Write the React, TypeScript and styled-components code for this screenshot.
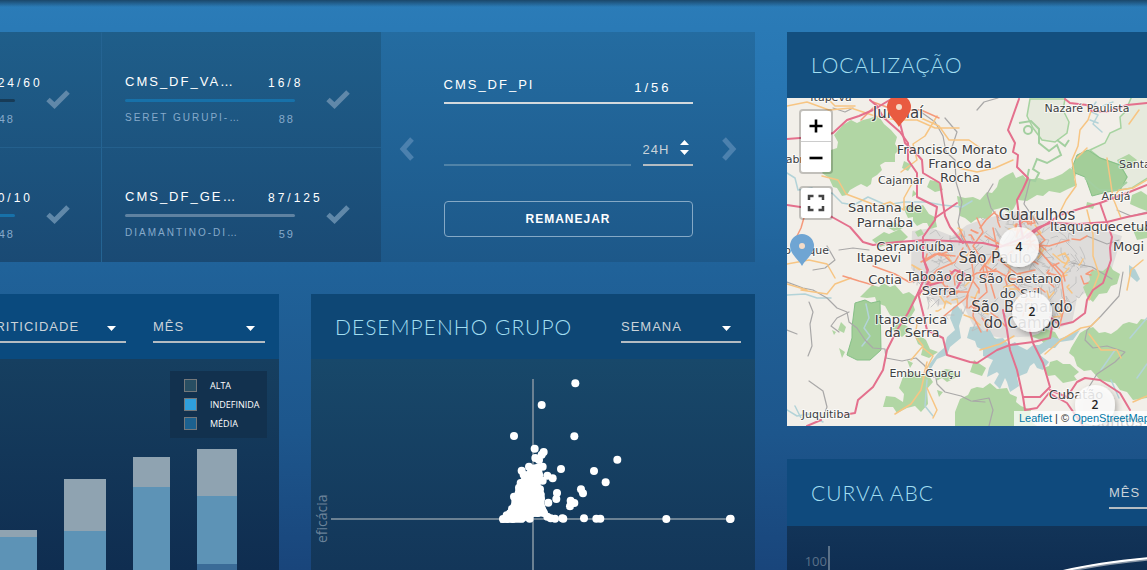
import React from 'react';
import styled, { createGlobalStyle } from 'styled-components';

const GlobalStyle = createGlobalStyle`
  *, *::before { box-sizing: border-box; }
  body {
    margin: 0;
    font-family: 'Liberation Sans', Arial, sans-serif;
    background: #19467c;
  }
  button, input, select { font: inherit; color: inherit; border-radius: 0; }
`;

/* ---------- page ---------- */

const Page = styled.main`
  min-height: 100vh;
  display: grid;
  grid-template-columns: minmax(0, 755fr) minmax(0, 360fr);
  column-gap: 32px;
  padding-top: 32px;
  overflow: hidden;
  background:
    linear-gradient(rgba(16, 36, 54, 0.6), rgba(16, 36, 54, 0) 7px),
    linear-gradient(#2b7cb8 0%, #2774b0 20%, #206299 47%, #1d568c 76%, #19457b 100%);
`;

const Column = styled.div<{ $gap: number }>`
  display: flex;
  flex-direction: column;
  gap: ${(p) => p.$gap}px;
  min-width: 0;
`;

const Row = styled.div`
  flex: 1;
  display: grid;
  grid-template-columns: minmax(0, 279fr) minmax(0, 444fr);
  gap: 32px;
`;

/* ---------- stock transfer ---------- */

const Transfer = styled.section`
  display: grid;
  grid-template-columns: minmax(0, 381fr) minmax(0, 374fr);
`;

const ItemGrid = styled.div`
  display: grid;
  grid-template-columns: 280px 280px;
  grid-template-rows: 115px 115px;
  justify-content: end;
  overflow: hidden;
  background: linear-gradient(#1f5e8a, #1a4a74);
`;

const Item = styled.article<{ $divided: boolean }>`
  display: flex;
  align-items: center;
  gap: 31px;
  padding: 20px 0 0 23px;
  border-left: 1px solid #256493;
  border-top: ${(p) => (p.$divided ? '1px solid #24608d' : '1px solid transparent')};
  background-clip: padding-box;
`;

const ItemBody = styled.div`
  width: 170px;
`;

const ItemLine = styled.div`
  display: flex;
  align-items: flex-end;
  height: 17px;
  line-height: 16px;
  font-size: 12px;
  white-space: nowrap;
  color: #fff;
`;

const ItemName = styled.span`
  flex: 0 0 143px;
  align-self: flex-start;
  font-size: 13px;
  letter-spacing: 2px;
`;

const ItemCount = styled.span`
  flex: 0 0 27px;
  letter-spacing: 3px;
`;

const ItemFootLine = styled(ItemLine)`
  justify-content: space-between;
  letter-spacing: 2px;
  font-size: 11px;
  color: #86aacb;
`;

const ItemPlace = styled.span`
  align-self: flex-start;
  font-size: 10px;
`;

const Meter = styled.div<{ $tone: string }>`
  height: 3px;
  margin: 8px 0;
  border-radius: 2px;
  background: ${(p) => p.$tone};
`;

const Form = styled.form`
  display: flex;
  align-items: center;
  justify-content: space-between;
  padding: 4px 18px 0;
  background: linear-gradient(#246ca1, #1d5889);
`;

const ArrowButton = styled.button`
  padding: 0;
  border: 0;
  background: none;
  color: #4c81ae;
  line-height: 0;
`;

const Fields = styled.div`
  flex: 0 1 249px;
  min-width: 0;
  padding-top: 14px;
  color: #fff;
  font-size: 13px;
  line-height: 16px;
  letter-spacing: 2px;
`;

const Product = styled.div`
  display: flex;
  justify-content: space-between;
  padding-bottom: 6px;
  margin-top: 2px;
  border-bottom: 2px solid #d3d9dd;
`;

const ProductName = styled.span`
  padding-bottom: 3px;
`;

const ProductCount = styled.span`
  padding: 3px 21px 0 0;
  letter-spacing: 3px;
`;

const FieldRow = styled.div`
  display: flex;
  gap: 12px;
  margin: 36px 0 35px;
`;

const TextBox = styled.input`
  flex: 1;
  min-width: 0;
  height: 26px;
  padding: 0;
  border: 0;
  border-bottom: 2px solid #5083a8;
  background: none;
  outline: none;
`;

const SubmitButton = styled.button`
  display: block;
  width: 100%;
  height: 36px;
  padding: 0;
  border: 1px solid #85a9c6;
  border-radius: 4px;
  background: none;
  font-size: 12px;
  font-weight: 700;
  letter-spacing: 1px;
`;

/* ---------- drop-downs ---------- */

const SelectBox = styled.label<{ $width: number }>`
  position: relative;
  display: block;
  flex: 0 0 ${(p) => p.$width}px;
`;

const Select = styled.select`
  appearance: none;
  display: block;
  width: 100%;
  height: 26px;
  padding: 0 0 4px;
  border: 0;
  border-bottom: 2px solid #b4bcc2;
  outline: none;
  background: none;
  color: #cad3d9;
  font-size: 13px;
  letter-spacing: 1px;
`;

const SelectIcon = styled.svg<{ $spinner?: boolean }>`
  position: absolute;
  right: ${(p) => (p.$spinner ? 4 : 10)}px;
  top: ${(p) => (p.$spinner ? 0 : 9)}px;
  pointer-events: none;
  fill: #fff;
`;

function Dropdown({ name, value, width, spinner }: { name: string; value: string; width: number; spinner?: boolean }) {
  return (
    <SelectBox $width={width}>
      <Select aria-label={name} defaultValue={value}>
        <option>{value}</option>
      </Select>
      {spinner ? (
        <SelectIcon $spinner width="9" height="15" viewBox="0 0 9 15">
          <path d="M0 5 4.500 0 9 5zM0 10h9L4.500 15z" />
        </SelectIcon>
      ) : (
        <SelectIcon width="9" height="5" viewBox="0 0 9 5">
          <path d="M0 0h9L4.500 5z" />
        </SelectIcon>
      )}
    </SelectBox>
  );
}

/* ---------- cards ---------- */

const Card = styled.section<{ $fill?: boolean }>`
  display: flex;
  flex-direction: column;
  min-width: 0;
  overflow: hidden;
  flex: ${(p) => (p.$fill ? '1 0 auto' : '0 0 auto')};
`;

const CardHeader = styled.header<{ $tone: string; $height: number; $end?: boolean }>`
  display: flex;
  align-items: center;
  justify-content: ${(p) => (p.$end ? 'flex-end' : 'space-between')};
  gap: 27px;
  height: ${(p) => p.$height}px;
  padding: 6px 14px 0 24px;
  overflow: hidden;
  background: ${(p) => p.$tone};
`;

const Title = styled.h2`
  margin: 0;
  padding-bottom: 6px;
  flex-shrink: 0;
  font-family: Lato, sans-serif;
  font-size: 21px;
  font-weight: 300;
  line-height: 24px;
  letter-spacing: 1px;
  color: #a2dff2;
`;

const CardBody = styled.div<{ $from: string; $to: string }>`
  position: relative;
  flex: 1;
  min-height: 44px;
  background: linear-gradient(${(p) => p.$from}, ${(p) => p.$to});
`;

const Chart = styled.svg`
  display: block;
  width: 100%;
  font-family: 'Open Sans', sans-serif;
`;

const Legend = styled.ul`
  position: absolute;
  top: 12px;
  right: 12px;
  width: 97px;
  margin: 0;
  padding: 5px 0 5px 14px;
  list-style: none;
  background: #12314e;
  color: #fff;
  font: 9px/19px 'Open Sans', sans-serif;
`;

const LegendItem = styled.li<{ $tone: string }>`
  display: flex;
  align-items: center;
  gap: 13px;
  height: 19px;
  &::before {
    content: '';
    width: 13px;
    height: 13px;
    border: 1px solid #74787b;
    background: ${(p) => p.$tone};
  }
`;

/* ---------- map ---------- */

const MapArea = styled.div`
  position: relative;
  height: 328px;
  overflow: hidden;
  background: #f2efe9;
`;

const MapDrawing = styled.svg`
  display: block;
  width: 100%;
  height: 100%;
  font-family: 'DejaVu Sans', sans-serif;
`;

const Controls = styled.div`
  position: absolute;
  top: 11px;
  left: 12px;
  display: flex;
  flex-direction: column;
  gap: 12px;
`;

const ControlGroup = styled.div`
  border: 2px solid rgba(0, 0, 0, 0.2);
  border-radius: 4px;
  background-clip: padding-box;
  background-color: #fff;
`;

const ControlButton = styled.button`
  display: flex;
  align-items: center;
  justify-content: center;
  width: 30px;
  height: 30px;
  padding: 0;
  border: 0;
  background: none;
  color: #000;
  & + & {
    height: 31px;
    border-top: 1px solid #ccc;
  }
`;

const Attribution = styled.div`
  position: absolute;
  left: 227px;
  bottom: 0;
  height: 15px;
  padding: 0 5px;
  white-space: nowrap;
  background: rgba(255, 255, 255, 0.75);
  color: #333;
  font-size: 11px;
  line-height: 14px;
`;

const MapLink = styled.a`
  color: #0078a8;
  text-decoration: none;
`;

const greens = [
  'M56 27 64 22 70 25 76 22 84 20 88 18 93 20 97 26 104 32 110 39 108 46 112 52 108 56 108 64 98 64 93 67 95 72 90 77 85 80 84 86 80 89 74 86 70 88 63 92 60 97 55 98 50 90 46 89 42 80 35 75 39 70 43 66 40 58 44 52 50 50 51 44 47 37z',
  'M116 109 124 106 130 109 136 107 142 116 148 119 150 129 143 131 140 125 136 125 130 128 126 123 126 119 121 120z',
  'M170 98 178 100 186 99 193 102 200 94 205 95 210 89 212 82 218 78 226 74 229 80 236 77 240 82 252 80 258 82 266 80 275 76 283 70 290 75 287 81 290 87 281 91 273 95 262 93 256 98 250 97 240 103 231 102 227 110 223 115 214 110 206 112 204 118 200 121 193 120 188 122 184 125 178 120 173 118z',
  'M143 82l10 2 3 8-8 2-8-5zM117 63l8 4-4 6-6-3zM126 92l4 4-5 3z',
  'M85 142l12-8 5 2 11-5 8 8-10 8-6-2-12 4zM98 128l10-4 8 6-9 3zM128 134l6-3 3 5-6 3z',
  'M80 192 85 187 92 189 96 185 103 189 108 187 116 196 122 194 130 200 126 206 128 212 120 225 114 218 109 220 103 217 98 208 90 205 88 199 80 200 73 199z',
  'M116 279 126 273 131 277 140 275 146 284 140 291 141 306 134 314 128 308 120 310 110 315 106 309 96 309 99 298 108 299 116 304 117 296 112 290z',
  'M127 236l8 3 4 3 4 9 8 3-9 6-8-3 2-8-5-3zM152 274l7-3 6 1 7 6-12 6-5-4-6 3zM104 231l8-6 6 2 6 4-9 8zM120 262l6 3-3 5zM150 292l6 2-4 5z',
  'M293 235 298 232 306 229 312 235 318 234 324 236 330 232 336 226 342 224 350 226 354 221 360 222 360 300 346 302 340 294 333 292 328 285 322 284 313 282 304 272 297 273 290 268 287 259 282 255 284 250z',
  'M168 314 173 301 181 297 184 291 190 289 196 290 203 285 210 291 220 290 223 296 230 299 229 304 234 308 244 312 242 322 250 328 168 328z',
  'M296 189 303 182 302 177 306 172 316 173 323 167 326 172 333 176 330 186 324 188 320 195 312 196 306 204 300 199z',
  'M256 270 262 268 263 264 270 262 276 266 283 266 292 274 287 278 290 282 276 285 268 277 261 278z',
  'M243 238l8-2 7-5 10 3 4 7-14 6-4-5zM203 238l9 4-2 9-10-4zM187 262l12 8-4 8-12-4z',
  'M345 97l9-4 6 4v16l-8-3-9-4zM346 132l14-4v12l-10 2zM300 104l8 2-2 5-7-2z',
  'M54 224l5 5-2 6-6-3zM52 250l6 4-3 6zM45 232l4 2-2 3zM330 62l12-6 8 6-6 8-10 2z',
];

const waters = [
  'M183 229 192 228 196 233 203 232 208 241 216 240 222 247 228 244 232 248 240 252 246 247 252 247 266 239 272 241 280 238 293 232 286 242 273 244 268 250 262 250 253 257 262 264 256 272 250 270 247 265 243 268 240 275 230 279 232 288 223 294 220 284 218 280 213 291 207 285 212 276 210 274 200 279 202 270 206 262 196 258 196 252 190 249 188 243 180 240z',
  'M166 209 170 207 176 215 172 228 174 240 163 249 160 257 150 261 143 272 141 268 151 255 157 250 160 239 168 232 163 220z',
  'M342 167l6 4 5 10-3 3-8-7z',
];

const waterLines = [
  'M0 75l8 5 3 12 14-2 12 8 8-3 10 10 12 2 14-8 18 8 18-3 22 0 16 3 20 2 10-6',
  'M0 197l18-1 12 4 14 0M79 206l3 14-5 10 6 8-8 10M309 4l-6 9 8 4-5 9 9 8M316 8l10-4M303 22l8 3',
  'M328 252l-14 20M343 240l17-20M350 280l10-14M332 300l-8-18M0 312l10 6 12-2 14 8M8 308l6 12M140 282l-2 26 8 10',
];

const minorRoads = [
  'M190 12l7-8 14-4M46 10l12 4 8-4M134 14l14 10 8 14 3 16 9 8 1 22 6 20-4 20 4 16 5 8',
  'M0 184l16 6 10 2 14 8 10 10 10 4 2 10 8 6 8 12 8 8 12 1 1 9 16 3 14-3 8 7 10 12M148 274l2 12 8 8 16 4 10 5 14 1',
  'M52 152l14-2 16 2M40 148l8 14-10 8-12 2M22 204l4 10-3 12 2 22-4 10M0 232l10 4M62 214l-12 6-6 8 8 6M22 283l14 10 4 16-3 8',
  'M336 174l-4 24-18 20-14 14-2 10 8 8 14-2 18 6-10 10-18 12-10 16M186 303l16-3 4 12-4 16',
  'M243 82l-6 24 14 20M206 86l-6 10 4 14 8 10M158 20l12 14-6 18M26 52l10 10M330 112l14 6 16-4M300 138l20 8 12-4M285 165l20 4 20 12',
];

const secondaryRoads = [
  'M0 8l20-4 22 8 22-2 24 8 22 4 20 0 18 8 24 0M40 0l8 8 20 0M150 18l-12 20-12 8 4 16-16 12M134 20l18 8 10 14 20 0 14 10',
  'M35 78l16 4 8 14 16 6 16 6 12-4 14 8 0-12 10-18M14 192l26 4 8-10 16-6M0 186l20 6M48 180l-8-14-18-4-22 4',
  'M305 10l-4 12-8 10-2 16-6 14 2 12 2 14-10 14-6 12M290 60l10-10',
  'M172 70l18 4 18-4 18-8M124 262l12-14-8-10 2-12M136 280l4-16M136 250l10 8-8 16-4 18-10 14-16 10M340 192l4-20 12-10M193 252l20-6 14-8M258 256l16-14 20-12 10-2 8-8M302 236l12 16 16 0 4 8',
  'M320 60l6 40 8 20M300 112l6 24 0 22 6 18-10 26M352 12l-10 14M360 82l-14 8-14 2-6 8M346 304l14-6M140 290l10 22-4 8',
];

const primaryRoads = [
  'M56 178l16 5 14 4M86 168l22 8 14 8 12-2M86 10l-12 12M18 116l-4 14-8 16M86 4l22 8 26 0 18 8',
  'M168 158l-20-2-14 8M176 150l-8 14-18 8-10 12M173 132l10 20 4 28-8 20-22 18M190 120l6 14-10 14 12 18 10 34',
  'M198 138l18 10 22-2 24 2 20-6M246 146l18 20 10 12 4 28-6 24M206 130l4 20-14 20 4 24-18 16M172 185l18-10 20-2 14 8 20 0',
  'M188 200l-2 18 8 16M226 186l14 12-4 20M212 162l18 14 18-4',
];

const motorways = [
  'M0 41 13 40 32 39 46 35 60 22 72 18 86 12 96 6 106 0',
  'M83 2 90 8 96 19 113 34 121 45 121 62 130 75 130 99 150 109 148 122 136 139 136 159 140 172',
  'M113 25 118 45 128 54 135 62 136 75 153 85 156 105 158 118 163 129 176 145',
  'M0 107 20 110 45 119 63 129 76 144 86 147 110 144 140 142 183 144',
  'M170 105 148 120M173 144 196 145 213 149 236 140 250 130 263 125 292 126 320 124 340 119 360 115',
  'M232 1 221 32 228 45 226 54 231 57 230 69 241 80 236 91 230 102 233 125 236 140',
  'M240 140 250 132 273 117 292 111 313 105 340 95 360 87',
  'M313 105 320 125 325 139 323 150 324 162 316 185 306 192 300 202 298 215 286 224 273 227 263 219',
  'M278 1 283 5 300 7 305 13 320 14 340 7 360 5',
  'M138 165 141 172 131 195 121 215 110 232 100 252 96 272 86 289 71 302 68 315 56 317M34 322 20 328',
  'M131 195 136 215 140 232 156 240 160 257 183 264 190 265 210 252 223 247 246 244 263 240 265 229',
  'M216 212 220 232 223 252 230 272 236 299 253 299 263 289 256 265 246 245 241 225',
  'M236 299 238 312 250 310 262 295 280 305 296 328M263 292 280 299 290 284 298 280 313 282 333 295 343 312',
  'M140 188l14-4 14-12 10 4-8 14M132 196l10-12',
];

// Street grid of the metropolitan area, jittered by a small fixed-seed generator.
function cityStreets() {
  let seed = 17;
  const next = () => {
    seed = (seed * 16807) % 2147483647;
    return seed / 2147483647;
  };
  return Array.from({ length: 250 }, () => {
    const angle = next() * Math.PI * 2;
    const reach = Math.sqrt(next());
    const x = 216 + Math.cos(angle) * reach * 88;
    const y = 172 + Math.sin(angle) * reach * 55;
    const step = () => Math.round(next() * 18 - 9);
    return `M${Math.round(x)} ${Math.round(y)}l${step()} ${step()} ${step()} ${step()}`;
  });
}

const streets = cityStreets();

type Label = [text: string, x: number, y: number, size: number, anchor?: 'start' | 'end'];

const labels: Label[] = [
  ['Itapeva', 44, 3, 11],
  ['Jundiaí', 111, 20, 15],
  ['Nazaré Paulista', 300, 14, 11],
  ['Francisco Morato', 165, 56, 13],
  ['Franco da', 173, 70, 13],
  ['Rocha', 173, 84, 13],
  ['Cabreúva', -9, 65, 11, 'start'],
  ['Cajamar', 114, 86, 11],
  ['Santa Isabel', 332, 70, 11, 'start'],
  ['Arujá', 329, 102, 11],
  ['Santana de', 98, 114, 13],
  ['Parnaíba', 98, 129, 13],
  ['Guarulhos', 250, 122, 15],
  ['Itaquaquecetuba', 263, 133, 13, 'start'],
  ['São Roque', 42, 156, 11, 'end'],
  ['Carapicuíba', 128, 153, 13],
  ['Mogi das Cruzes', 326, 153, 13, 'start'],
  ['Itapevi', 92, 164, 13],
  ['São Paulo', 208, 165, 15],
  ['Cotia', 98, 186, 13],
  ['Taboão da', 152, 183, 13],
  ['Serra', 152, 197, 13],
  ['São Caetano', 233, 185, 13],
  ['do Sul', 233, 200, 13],
  ['São Bernardo', 235, 214, 15],
  ['do Campo', 235, 230, 15],
  ['Itapecerica', 124, 226, 13],
  ['da Serra', 125, 239, 13],
  ['Embu-Guaçu', 138, 279, 11],
  ['Cubatão', 289, 301, 13],
  ['Juquitiba', 39, 320, 11],
  ['Santos', 330, 329, 15],
];

const pins = [
  { x: 112, y: 29, tone: '#e95b40' },
  { x: 15, y: 168, tone: '#6fa5d3' },
];

const clusters = [
  { x: 232, y: 149, count: 4 },
  { x: 245, y: 214, count: 2 },
  { x: 308, y: 307, count: 2 },
];

function CityMap() {
  return (
    <MapDrawing viewBox="0 0 360 328" preserveAspectRatio="xMinYMin slice" aria-label="Mapa">
      <defs>
        <filter id="lift" x="-30%" y="-30%" width="170%" height="170%">
          <feDropShadow dx="2" dy="3" stdDeviation="3" floodColor="#000" floodOpacity="0.35" />
        </filter>
      </defs>
      <g fill="#e6eadd" stroke="#a6d3a0" strokeWidth="1.500">
        <path d="M243 1 240 18 246 30 255 42 268 44 280 35 282 24 276 12 278 1z" />
        <path d="M345 -2 338 14 333 19 334 30 323 35 318 45 303 52 313 60 333 67 340 79 333 92 345 90 362 79 362 -2z" />
      </g>
      <path
        d="M125 133 145 130 165 138 180 127 200 120 230 113 262 122 300 128 335 138 322 180 290 200 285 225 250 238 215 240 190 235 175 205 150 207 138 190 124 170z"
        fill="#dedcda"
      />
      <g fill="#b1d6a4">
        {greens.map((d) => <path key={d} d={d} />)}
      </g>
      <g fill="#a3ce99" stroke="#87c088" strokeWidth="1">
        <path d="M68 205 78 202 84 205 93 203 94 252 83 262 70 262 60 257 65 240 65 229z" />
        <path d="M285 70 290 57 301 52 313 60 333 67 340 79 333 92 320 94 305 98 300 84 298 79 288 75z" />
      </g>
      <g fill="none" stroke="#a3cfa0" strokeWidth="2">
        <path d="M232 25l12-2 8 8 0 14 10 8 8-6 4 10-14 8-10-4-4 10 6 4-4 8-8-2 2-10M270 42l8 6 4-6" />
        <circle cx="241" cy="32" r="4" />
        <path d="M298 80l14 12 18 0 10-8" />
      </g>
      <g fill="#b3d1d4">
        {waters.map((d) => <path key={d} d={d} />)}
      </g>
      <g fill="none" strokeLinejoin="round" strokeLinecap="round">
        <g stroke="#b3d3d8" strokeWidth="1.500">
          {waterLines.map((d) => <path key={d} d={d} />)}
        </g>
        <g stroke="#bdbcbc" strokeWidth="0.800">
          {streets.slice(0, 170).map((d, i) => <path key={i} d={d} />)}
        </g>
        <g stroke="#a9a8a8" strokeWidth="1.200">
          {minorRoads.map((d) => <path key={d} d={d} />)}
        </g>
        <g stroke="#f7c583" strokeWidth="1.500">
          {secondaryRoads.map((d) => <path key={d} d={d} />)}
          {streets.slice(170, 205).map((d, i) => <path key={i} d={d} />)}
        </g>
        <g stroke="#f5997b" strokeWidth="1.500">
          {primaryRoads.map((d) => <path key={d} d={d} />)}
          {streets.slice(205).map((d, i) => <path key={i} d={d} />)}
        </g>
        <g stroke="#e4708d" strokeWidth="2">
          {motorways.map((d) => <path key={d} d={d} />)}
        </g>
      </g>
      <g fill="#403f42" stroke="#fff" strokeOpacity="0.7" strokeWidth="2" paintOrder="stroke" strokeLinejoin="round">
        {labels.map(([text, x, y, size, anchor]) => (
          <text key={text} x={x} y={y} fontSize={size} textAnchor={anchor ?? 'middle'}>
            {text}
          </text>
        ))}
      </g>
      {pins.map((pin) => (
        <g key={pin.x} transform={`translate(${pin.x} ${pin.y})`}>
          <path d="M0 0C-3 -6 -12 -12 -12 -20A12 12 0 0 1 12 -20C12 -12 3 -6 0 0z" fill={pin.tone} />
          <circle cx="0" cy="-20" r="3" fill="#f4dcc8" />
        </g>
      ))}
      {clusters.map((c) => (
        <g key={c.x}>
          <circle cx={c.x} cy={c.y} r="20" fill="#fff" fillOpacity="0.82" filter="url(#lift)" />
          <text x={c.x} y={c.y + 4} fontSize="12" fontFamily="'Open Sans', sans-serif" fontWeight="600" textAnchor="middle" fill="#222">
            {c.count}
          </text>
        </g>
      ))}
    </MapDrawing>
  );
}

/* ---------- data ---------- */

const items = [
  { name: 'CMS_DF_AL…', count: '124/60', place: 'SERET GURUPI-…', total: 48, tone: '#173b57' },
  { name: 'CMS_DF_VA…', count: '16/8', place: 'SERET GURUPI-…', total: 88, tone: '#1771a9' },
  { name: 'CMS_DF_BE…', count: '10/10', place: 'DIAMANTINO-DI…', total: 48, tone: '#1771a9' },
  { name: 'CMS_DF_GE…', count: '87/125', place: 'DIAMANTINO-DI…', total: 59, tone: '#5f82a1' },
];

const bars = [
  { x: -4, width: 41, top: 171, split: 178 },
  { x: 64, width: 42, top: 120, split: 172 },
  { x: 133, width: 37, top: 98, split: 128 },
  { x: 197, width: 40, top: 90, split: 137, base: 205 },
];

// Scatter samples, three units to the pixel, with the axes crossing at (128, 477).
const dots: [number, number][] = [
  [256, 70], [155, 135], [72, 228], [253, 229], [134, 266], [161, 276], [382, 299], [213, 327],
  [312, 333], [347, 367], [188, 355], [273, 388], [279, 400], [201, 399], [199, 417], [175, 428],
  [242, 422], [253, 429], [240, 439], [220, 476], [282, 475], [319, 476], [331, 476], [529, 477],
  [720, 477], [217, 475], [155, 284], [136, 294], [147, 300], [158, 320], [117, 320], [132, 328],
  [95, 332], [101, 344], [172, 347], [158, 362], [92, 369], [87, 383], [72, 410], [76, 422],
  [66, 447], [60, 460], [50, 466], [39, 477], [52, 477], [68, 477], [92, 475], [119, 476],
  [150, 388], [152, 404], [153, 416], [148, 436], [158, 452], [162, 459], [143, 459], [172, 470],
  [182, 475], [195, 476], [722, 476],
];

function Check() {
  return (
    <svg width="24" height="20" viewBox="0 0 24 20" role="img" aria-label="Selecionado">
      <path d="M2 9.500 8.500 15.500 22 2" fill="none" stroke="#6088a9" strokeWidth="5" />
    </svg>
  );
}

function Chevron({ left }: { left?: boolean }) {
  return (
    <svg width="16" height="24" viewBox="0 0 16 24">
      <path d={left ? 'M13 2 4 12 13 22' : 'M3 2 12 12 3 22'} fill="none" stroke="currentColor" strokeWidth="5" />
    </svg>
  );
}

export default function App() {
  return (
    <>
      <GlobalStyle />
      <Page>
        <Column $gap={32}>
          <Transfer>
            <ItemGrid>
              {items.map((item, i) => (
                <Item key={item.name} $divided={i > 1}>
                  <ItemBody>
                    <ItemLine>
                      <ItemName>{item.name}</ItemName>
                      <ItemCount>{item.count}</ItemCount>
                    </ItemLine>
                    <Meter $tone={item.tone} />
                    <ItemFootLine>
                      <ItemPlace>{item.place}</ItemPlace>
                      <span>{item.total}</span>
                    </ItemFootLine>
                  </ItemBody>
                  <Check />
                </Item>
              ))}
            </ItemGrid>
            <Form onSubmit={(e) => e.preventDefault()}>
              <ArrowButton type="button" aria-label="Anterior"><Chevron left /></ArrowButton>
              <Fields>
                <Product>
                  <ProductName>CMS_DF_PI</ProductName>
                  <ProductCount>1/56</ProductCount>
                </Product>
                <FieldRow>
                  <TextBox aria-label="Quantidade" />
                  <Dropdown name="Prazo" value="24H" width={50} spinner />
                </FieldRow>
                <SubmitButton type="submit">REMANEJAR</SubmitButton>
              </Fields>
              <ArrowButton type="button" aria-label="Próximo"><Chevron /></ArrowButton>
            </Form>
          </Transfer>
          <Row>
            <Card>
              <CardHeader $tone="#0a4a7e" $height={65} $end>
                <Dropdown name="Agrupamento" value="CRITICIDADE" width={141} />
                <Dropdown name="Período" value="MÊS" width={112} />
              </CardHeader>
              <CardBody $from="#163f60" $to="#0f2d50">
                <Chart viewBox="0 0 279 211" aria-label="Criticidade por mês">
                  {bars.map((b) => (
                    <g key={b.x}>
                      <rect x={b.x} y={b.top} width={b.width} height={b.split - b.top} fill="#8fa3b1" />
                      <rect x={b.x} y={b.split} width={b.width} height={211 - b.split} fill="#5d93b6" />
                      {b.base && <rect x={b.x} y={b.base} width={b.width} height={211 - b.base} fill="#3a6b97" />}
                    </g>
                  ))}
                </Chart>
                <Legend>
                  <LegendItem $tone="#284e62">ALTA</LegendItem>
                  <LegendItem $tone="#2f9fdc">INDEFINIDA</LegendItem>
                  <LegendItem $tone="#1c618f">MÉDIA</LegendItem>
                </Legend>
              </CardBody>
            </Card>
            <Card>
              <CardHeader $tone="#0e4775" $height={65}>
                <Title>DESEMPENHO GRUPO</Title>
                <Dropdown name="Período" value="SEMANA" width={120} />
              </CardHeader>
              <CardBody $from="#18486a" $to="#133659">
                <Chart viewBox="0 0 444 211" aria-label="Desempenho do grupo">
                  <path d="M20 160H419M222 20V211" stroke="#6b8193" strokeWidth="2" />
                  <text transform="translate(16 184) rotate(-90)" fontSize="14" fill="#6b8299">eficácia</text>
                  <g transform="translate(179 1) scale(0.3333)" fill="#fff">
                    <path d="M30 488 60 440 72 405 80 375 100 345 125 315 150 310 160 345 152 375 163 400 163 430 175 468 120 472 100 488z" />
                    {dots.map(([x, y]) => <circle key={`${x}-${y}`} cx={x} cy={y} r="12" />)}
                  </g>
                </Chart>
              </CardBody>
            </Card>
          </Row>
        </Column>
        <Column $gap={33}>
          <Card>
            <CardHeader $tone="#134f7f" $height={66}>
              <Title>LOCALIZAÇÃO</Title>
            </CardHeader>
            <MapArea>
              <CityMap />
              <Controls>
                <ControlGroup>
                  <ControlButton type="button" aria-label="Aproximar">
                    <svg width="14" height="14" viewBox="0 0 14 14"><path d="M7 0.500V13.500M0.500 7H13.500" stroke="#000" strokeWidth="2.600" /></svg>
                  </ControlButton>
                  <ControlButton type="button" aria-label="Afastar">
                    <svg width="14" height="14" viewBox="0 0 14 14"><path d="M0.500 8H13.500" stroke="#000" strokeWidth="2.600" /></svg>
                  </ControlButton>
                </ControlGroup>
                <ControlGroup>
                  <ControlButton type="button" aria-label="Tela cheia">
                    <svg width="18" height="18" viewBox="0 0 18 18">
                      <path d="M2 6V2H6.500M11.500 2H16V6M16 12V16H11.500M6.500 16H2V12" fill="none" stroke="#444" strokeWidth="2.500" />
                    </svg>
                  </ControlButton>
                </ControlGroup>
              </Controls>
              <Attribution>
                <MapLink href="#leaflet">Leaflet</MapLink> | © <MapLink href="#osm">OpenStreetMap</MapLink> contributors
              </Attribution>
            </MapArea>
          </Card>
          <Card $fill>
            <CurveHeader $tone="#0f4a7d" $height={67}>
              <Title>CURVA ABC</Title>
              <Dropdown name="Período" value="MÊS" width={112} />
            </CurveHeader>
            <CardBody $from="#123458" $to="#0f2e52">
              <Chart viewBox="0 0 360 44" aria-label="Curva ABC">
                <path d="M42 20V44" stroke="#5a7188" strokeWidth="2" />
                <text x="40" y="40" fontSize="13" textAnchor="end" fill="#5a7189">100</text>
                <path d="M272 47C300 40 330 36 362 33" fill="none" stroke="#8795a5" strokeWidth="3" />
                <path d="M272 46C300 39 330 35 362 32" fill="none" stroke="#fff" strokeWidth="2" />
              </Chart>
            </CardBody>
          </Card>
        </Column>
      </Page>
    </>
  );
}

/* The curve card's filter runs past the right edge of the page. */
const CurveHeader = styled(CardHeader)`
  margin-right: -88px;
`;
